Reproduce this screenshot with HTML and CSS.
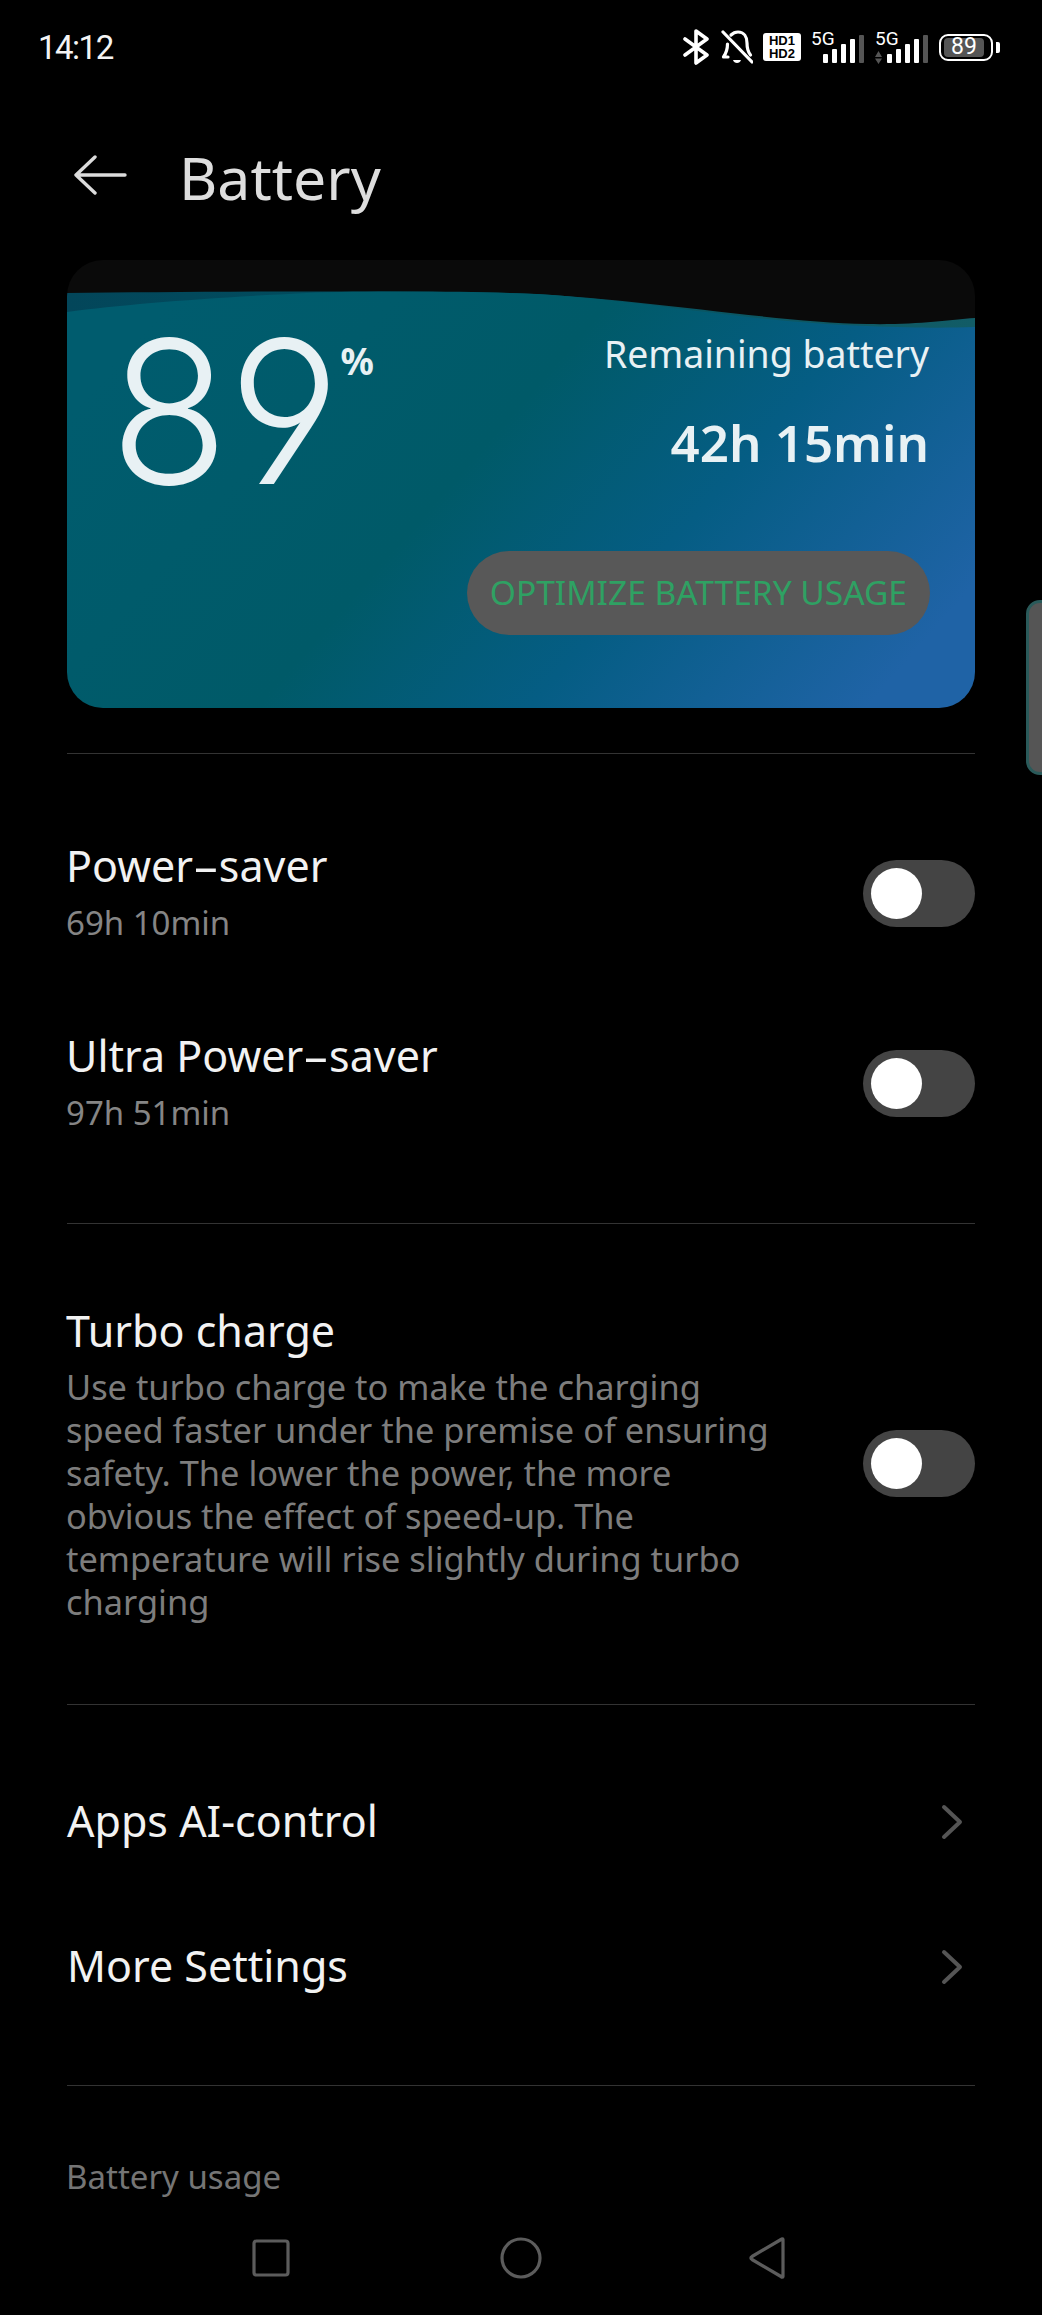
FILE: index.html
```html
<!DOCTYPE html>
<html lang="en">
<head>
<meta charset="utf-8">
<title>Battery</title>
<link rel="stylesheet" href="styles.css">
</head>
<body>
<div class="screen">
  <div class="status">
    <span class="time">14:12</span>
    <div class="status-icons">
      <svg class="ic-bt" viewBox="0 0 30 36"><path d="M4 10 L26 26 L15 34 V2 L26 10 L4 26" fill="none" stroke="#fff" stroke-width="3.6" stroke-linejoin="round" stroke-linecap="round"/></svg>
      <svg class="ic-bell" viewBox="0 0 32 36"><path d="M7 28 H2.5 C6 23 6.500 20 6.500 15 M10 6 C12 4 14 3 17 3 C23 3 26 8 26 14 C26 20 27 23 29.500 26" fill="none" stroke="#fff" stroke-width="3.200" stroke-linecap="round" stroke-linejoin="round"/><path d="M2 3 L31 33" stroke="#fff" stroke-width="3.200" stroke-linecap="round"/><path d="M12 31 H20 C19 35 13 35 12 31Z" fill="#fff"/></svg>
      <div class="hd"><span>HD1</span><span>HD2</span></div>
      <svg class="ic-sig" viewBox="0 -8 54 44"><text x="0" y="16" class="sig-text">5G</text><rect x="12" y="25" width="5" height="9" rx="1" fill="#fff"/><rect x="21" y="20" width="5" height="14" rx="1" fill="#fff"/><rect x="30" y="15" width="5" height="19" rx="1" fill="#fff"/><rect x="39" y="10" width="5" height="24" rx="1" fill="#fff"/><rect x="48" y="6" width="5" height="28" rx="1" fill="#555"/></svg>
      <svg class="ic-sig" viewBox="0 -8 54 44"><text x="0" y="16" class="sig-text">5G</text><path d="M0 28 L3.500 22 L7 28Z M0 29.500 H7 L3.500 35Z" fill="#555"/><rect x="12" y="25" width="5" height="9" rx="1" fill="#fff"/><rect x="21" y="20" width="5" height="14" rx="1" fill="#fff"/><rect x="30" y="15" width="5" height="19" rx="1" fill="#fff"/><rect x="39" y="10" width="5" height="24" rx="1" fill="#fff"/><rect x="48" y="6" width="5" height="28" rx="1" fill="#555"/></svg>
      <div class="bat">
        <div class="bat-body"><span class="bat-fill">89</span></div>
        <span class="bat-tip"></span>
      </div>
    </div>
  </div>

  <header class="head">
    <svg class="back" viewBox="0 0 54 40"><path d="M21 2 L2 20 L21 38 M2 20 H51" fill="none" stroke="#dcdcdc" stroke-width="3.400" stroke-linecap="round" stroke-linejoin="round"/></svg>
    <h1 class="title">Battery</h1>
  </header>

  <section class="card">
    <svg class="wave" viewBox="0 0 908 448" preserveAspectRatio="none">
      <defs>
        <linearGradient id="g" x1="0" y1="0.3" x2="1" y2="0.7">
          <stop offset="0" stop-color="#005c6e"/>
          <stop offset="0.42" stop-color="#005a68"/>
          <stop offset="0.68" stop-color="#055d84"/>
          <stop offset="1" stop-color="#1f63a6"/>
        </linearGradient>
        <linearGradient id="b" x1="0" y1="0" x2="1" y2="0">
          <stop offset="0" stop-color="#03465a"/>
          <stop offset="0.4" stop-color="#004f60"/>
          <stop offset="1" stop-color="#125c66"/>
        </linearGradient>
      </defs>
      <path d="M0 33 C120 32 280 30 440 33 C560 36 700 62 800 64 C850 65 880 60 908 58 V120 H0Z" fill="url(#b)"/>
      <path d="M0 52 C60 44 140 38 240 33 C300 31 400 31 470 34 C590 42 680 62 800 66 C850 68 880 68 908 67 V448 H0Z" fill="url(#g)"/>
    </svg>
    <div class="card-body">
      <div class="level"><span class="level-num">89</span><span class="level-pct">%</span></div>
      <div class="remain">
        <span class="remain-label">Remaining battery</span>
        <span class="remain-time">42h 15min</span>
        <span class="optimize">OPTIMIZE BATTERY USAGE</span>
      </div>
    </div>
  </section>

  <hr class="rule rule-card">

  <div class="row row-toggle">
    <div class="row-text"><div class="row-title">Power<span class="hy">-</span>saver</div><div class="row-sub">69h 10min</div></div>
    <span class="toggle"><span class="thumb"></span></span>
  </div>
  <div class="row row-toggle">
    <div class="row-text"><div class="row-title">Ultra Power<span class="hy">-</span>saver</div><div class="row-sub">97h 51min</div></div>
    <span class="toggle"><span class="thumb"></span></span>
  </div>

  <hr class="rule rule-a">

  <div class="row row-turbo">
    <div class="row-text turbo-text">
      <div class="row-title">Turbo charge</div>
      <div class="row-desc">Use turbo charge to make the charging speed faster under the premise of ensuring safety. The lower the power, the more obvious the effect of speed-up. The temperature will rise slightly during turbo charging</div>
    </div>
    <span class="toggle"><span class="thumb"></span></span>
  </div>

  <hr class="rule rule-b">

  <div class="row row-link">
    <div class="row-title link-title">Apps AI-control</div>
    <svg class="chev" viewBox="0 0 22 36"><path d="M3 3 L19 18 L3 33" fill="none" stroke="#555" stroke-width="4" stroke-linecap="round" stroke-linejoin="round"/></svg>
  </div>
  <div class="row row-link">
    <div class="row-title link-title">More Settings</div>
    <svg class="chev" viewBox="0 0 22 36"><path d="M3 3 L19 18 L3 33" fill="none" stroke="#555" stroke-width="4" stroke-linecap="round" stroke-linejoin="round"/></svg>
  </div>

  <hr class="rule rule-c">

  <div class="section-label">Battery usage</div>

  <nav class="nav">
    <svg class="nav-ic" viewBox="0 0 44 44"><rect x="5" y="5" width="34" height="34" rx="2.500" fill="none" stroke="#5c5c5c" stroke-width="3.200"/></svg>
    <svg class="nav-ic" viewBox="0 0 44 44"><circle cx="22" cy="22" r="19" fill="none" stroke="#5c5c5c" stroke-width="3.200"/></svg>
    <svg class="nav-ic nav-back" viewBox="0 0 44 44"><path d="M36 3.500 V40.500 C36 41.500 35 41.500 34 40.500 L5 23.500 C3.500 22.500 3.500 21.500 5 20.500 L34 3.500 C35 2.500 36 2.500 36 3.500Z" fill="none" stroke="#5c5c5c" stroke-width="3.200" stroke-linejoin="round"/></svg>
  </nav>

  <div class="side-tab"></div>
</div>
</body>
</html>
```
FILE: styles.css
```css
* { box-sizing: border-box; }
html, body { margin: 0; padding: 0; background: #000; }
.screen {
  position: relative;
  width: 1042px;
  height: 2315px;
  overflow: hidden;
  background: #000;
  font-family: "Noto Sans", "Open Sans", sans-serif;
  color: #f2f2f2;
  display: flex;
  flex-direction: column;
}

/* status bar */
.status {
  height: 94px;
  padding: 0 42px 0 38px;
  display: flex;
  align-items: center;
  justify-content: space-between;
  flex: none;
}
.time { font-family: Roboto, sans-serif; font-size: 33px; color: #f4f4f4; letter-spacing: -1.5px; }
.status-icons { display: flex; align-items: center; gap: 10px; }
.ic-bt { width: 30px; height: 36px; }
.ic-bell { width: 32px; height: 36px; }
.hd {
  width: 38px;
  height: 28px;
  background: #fff;
  border-radius: 3px;
  display: flex;
  flex-direction: column;
  align-items: center;
  justify-content: center;
  color: #000;
  font-family: "Liberation Sans", sans-serif;
  font-weight: 700;
  font-size: 13px;
  line-height: 13px;
}
.ic-sig { width: 54px; height: 44px; margin-top: -8px; }
.sig-text { font-family: Roboto, sans-serif; font-size: 19px; fill: #fff; }
.bat { display: flex; align-items: center; gap: 3px; }
.bat-body {
  width: 54px;
  height: 27px;
  border: 2.500px solid #fff;
  border-radius: 9px;
  padding: 2px 7px 2px 3px;
  display: flex;
}
.bat-fill {
  flex: 1;
  background: #555;
  border-radius: 4px;
  color: #fff;
  font-family: Roboto, sans-serif;
  font-size: 23px;
  line-height: 18px;
  text-align: center;
}
.bat-tip { width: 4px; height: 11px; background: #fff; border-radius: 0 2px 2px 0; }

/* header */
.head {
  height: 166px;
  padding: 0 0 0 74px;
  display: flex;
  align-items: center;
  flex: none;
}
.back { width: 54px; height: 40px; margin-right: 51px; margin-top: -4px; }
.title { margin: 0; font-size: 59px; font-weight: 400; color: #dedede; line-height: 1; }

/* card */
.card {
  position: relative;
  flex: none;
  height: 448px;
  margin: 0 67px;
  background: #0a0a0a;
  border-radius: 36px;
  overflow: hidden;
}
.wave { position: absolute; inset: 0; width: 100%; height: 100%; display: block; }
.card-body {
  position: relative;
  height: 100%;
  padding: 0 46px 0 43px;
  display: flex;
  justify-content: space-between;
  color: #e8f1f4;
}
.level { display: flex; align-items: flex-start; margin-top: 31px; }
.level-num {
  font-family: Inter, sans-serif;
  font-weight: 300;
  font-size: 200px;
  line-height: 240px;
  font-feature-settings: "ss01";
  transform: scaleX(0.97);
  transform-origin: left center;
}
.level-pct { font-weight: 700; font-size: 37px; line-height: 48px; margin-top: 46px; margin-left: -7px; }
.remain { display: flex; flex-direction: column; align-items: flex-end; padding-top: 70px; }
.remain-label { font-size: 37.4px; line-height: 48px; }
.remain-time { font-size: 51px; line-height: 60px; font-weight: 600; margin-top: 34px; }
.optimize {
  margin: 79px -1px 0 0;
  height: 84px;
  padding: 0 23px;
  border-radius: 42px;
  background: #585858;
  color: #2fa163;
  font-size: 33.5px;
  line-height: 82px;
  white-space: nowrap;
}

/* rows */
.rule { flex: none; height: 1px; border: 0; margin: 0 67px; background: #333; }
.rule-card { margin-top: 45px; }
.rule-a { margin-top: 45px; }
.rule-b { margin-top: 0; }
.rule-c { margin-top: 46px; }
.row {
  flex: none;
  margin: 0 67px;
  display: flex;
  align-items: center;
  justify-content: space-between;
}
.row-toggle { height: 190px; }
.rule-card + .row-toggle { margin-top: 44px; }
.row-text { margin-left: -1px; }
.row-toggle .row-text { margin-top: -2px; }
.row-title { font-size: 43px; line-height: 56px; color: #f2f2f2; }
.hy { display: inline-block; margin: 0 6px; transform: scaleX(1.9); }
.row-sub { font-size: 33px; line-height: 46px; color: #858585; margin-top: 6px; }
.row-turbo { height: 480px; padding-bottom: 2px; }
.turbo-text { width: 730px; }
.row-desc { font-size: 34.4px; line-height: 43px; color: #7d7d7d; margin-top: 6px; }
.toggle { flex: none; width: 112px; height: 67px; border-radius: 34px; background: #444; display: flex; align-items: center; padding-left: 8px; }
.thumb { width: 51px; height: 51px; border-radius: 50%; background: #fff; }
.row-link { height: 145px; }
.rule-b + .row-link { margin-top: 44px; }
.link-title { margin-top: -2px; }
.chev { width: 22px; height: 36px; margin-right: 12px; }
.section-label { flex: none; margin: 68px 66px 0; font-size: 33px; line-height: 46px; color: #757575; }
.nav {
  flex: none;
  margin-top: 36px;
  display: grid;
  grid-template-columns: repeat(3, 250px);
  justify-content: center;
  justify-items: center;
}
.nav-ic { width: 44px; height: 44px; }
.nav-back { margin-right: 4px; }
.side-tab {
  position: absolute;
  top: 600px;
  right: -14px;
  width: 30px;
  height: 175px;
  background: #555;
  border: 3px solid #2a5a5a;
  border-radius: 14px;
}
```
